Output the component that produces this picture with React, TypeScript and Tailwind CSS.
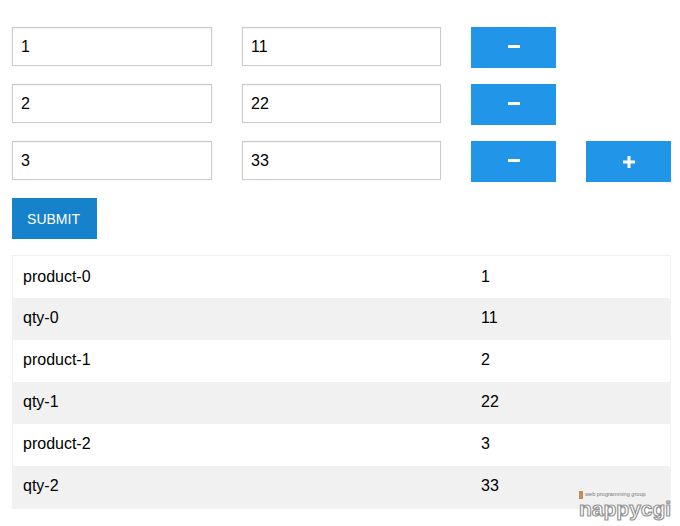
import React, { useState } from 'react';

interface Row {
  id: number;
  product: string;
  qty: string;
}

const initialRows: Row[] = [
  { id: 0, product: '1', qty: '11' },
  { id: 1, product: '2', qty: '22' },
  { id: 2, product: '3', qty: '33' },
];

const inputClass =
  'h-[39px] border border-[#cccccc] bg-white px-2 text-base text-black shadow-[0_0_1px_rgba(0,0,0,0.15),inset_0_1px_1px_rgba(0,0,0,0.05)] outline-none';

const squareBtn =
  'flex h-[41px] w-[85px] shrink-0 items-center justify-center bg-[#2196e8] text-white';

export default function App() {
  const [rows, setRows] = useState<Row[]>(initialRows);

  // Flatten rows for the result table
  const tableRows = rows.flatMap((r) => [
    { label: `product-${r.id}`, value: r.product },
    { label: `qty-${r.id}`, value: r.qty },
  ]);

  const update = (id: number, key: 'product' | 'qty', value: string) => {
    setRows(rows.map((r) => (r.id === id ? { ...r, [key]: value } : r)));
  };

  return (
    <div className="relative h-[526px] w-[680px] overflow-hidden bg-white pt-[27px] pl-3 pr-[9px] font-['Liberation_Sans',Arial,sans-serif] text-black">
      <div className="flex flex-col gap-4">
        {rows.map((r, i) => (
          <div key={r.id} className="flex items-start">
            <input
              value={r.product}
              onChange={(e) => update(r.id, 'product', e.target.value)}
              className={`${inputClass} w-[200px]`}
            />
            <input
              value={r.qty}
              onChange={(e) => update(r.id, 'qty', e.target.value)}
              className={`${inputClass} ml-[30px] w-[199px]`}
            />
            <button className={`${squareBtn} ml-[30px]`} aria-label="Remove">
              <svg className="mb-[2px]" width="12" height="3" viewBox="0 0 12 3">
                <rect width="12" height="3" fill="currentColor" />
              </svg>
            </button>
            {i === rows.length - 1 && (
              <button className={`${squareBtn} ml-[30px]`} aria-label="Add">
                <svg width="12" height="12" viewBox="0 0 12 12">
                  <path d="M4.5 0h3v4.5H12v3H7.5V12h-3V7.5H0v-3h4.5z" fill="currentColor" />
                </svg>
              </button>
            )}
          </div>
        ))}
      </div>

      <button className="mt-4 h-[41px] w-[85px] bg-[#1582cb] pr-[2px] text-sm text-white">SUBMIT</button>

      {/* Submitted values */}
      <div className="mt-4 w-[659px] border border-[#f1f1f1]">
        {tableRows.map((row, i) => (
          <div
            key={row.label}
            className={`flex h-[42px] items-center pl-[10px] text-base ${i > 0 ? 'pb-[2px]' : ''} ${i % 2 === 1 ? 'bg-[#f1f1f1]' : 'bg-white'}`}
          >
            <span className="w-[458px]">{row.label}</span>
            <span>{row.value}</span>
          </div>
        ))}
      </div>

      {/* Watermark */}
      <div className="absolute top-[491px] left-[579px] w-[92px] leading-none">
        <div className="flex items-center gap-[2px]">
          <span className="h-[8px] w-[4px] bg-[#c88a58]" />
          <span className="text-[5.6px] whitespace-nowrap text-[#777777]">web programming group</span>
        </div>
        <div className="-mt-[1px] text-[21px] font-bold text-white [-webkit-text-stroke:1.2px_#959595]">
          nappycgi
        </div>
      </div>
    </div>
  );
}
